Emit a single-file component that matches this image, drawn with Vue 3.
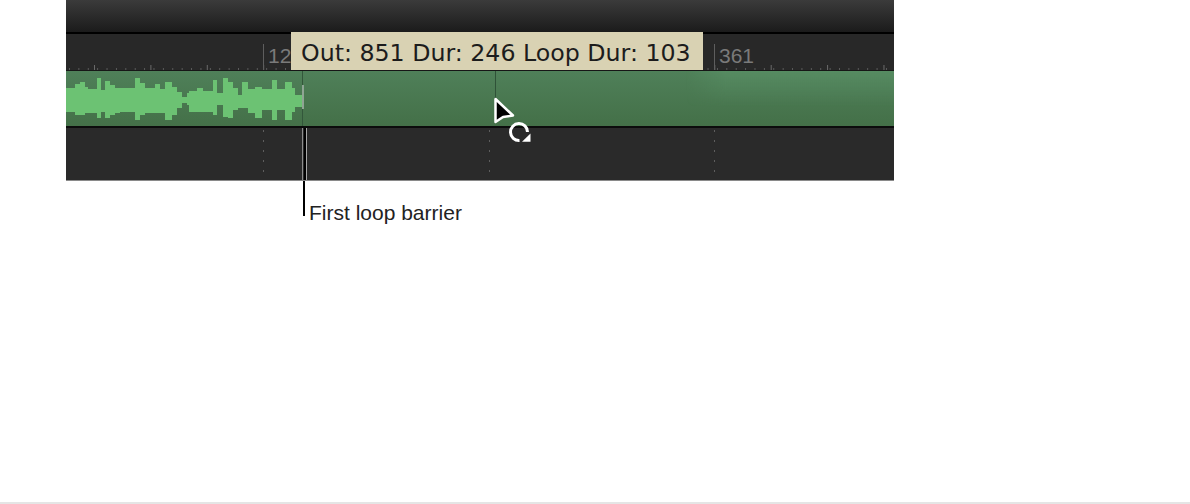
<script setup>
// stepped waveform envelope: [end x, top y, bottom y], x relative to the clip, y relative to the clip top
const steps = [
  [9, 17, 41], [14, 13, 44], [19, 11, 44], [22, 16, 42], [31, 18, 42], [35, 7, 47], [39, 19, 41],
  [44, 10, 47], [49, 14, 44], [54, 17, 42], [69, 17, 41], [74, 7, 49], [79, 12, 44], [89, 17, 42],
  [94, 13, 42], [99, 18, 42], [106, 11, 49], [111, 16, 44], [116, 21, 37], [121, 26, 32],
  [123, 22, 34], [131, 20, 41], [137, 17, 41], [147, 20, 41], [151, 9, 44], [157, 22, 34],
  [162, 7, 46], [167, 11, 47], [172, 17, 39], [176, 24, 37], [182, 11, 37], [189, 18, 42],
  [196, 16, 47], [206, 18, 39], [211, 9, 49], [219, 18, 39], [226, 11, 49], [229, 17, 41], [237, 24, 36]
]

const wavePoints = (() => {
  const top = []
  const bottom = []
  let x = 0
  for (const [end, t, b] of steps) {
    top.push(`${x},${t} ${end},${t}`)
    bottom.unshift(`${end},${b} ${x},${b}`)
    x = end
  }
  return [...top, ...bottom].join(' ')
})()
</script>

<template>
  <div class="page">
    <div class="timeline">
      <div class="top-bar"></div>
      <div class="ruler">
        <span class="mark mark-a">12</span>
        <span class="mark mark-b">361</span>
      </div>
      <div class="clip">
        <svg class="wave" width="237" height="55" viewBox="0 0 237 55">
          <polygon :points="wavePoints" fill="#6cc273" />
        </svg>
        <div class="clip-glow"></div>
        <div class="barrier"></div>
        <div class="barrier-handle"></div>
        <div class="drag-line"></div>
      </div>
      <div class="track">
        <i class="dots dots-a"></i>
        <i class="dots dots-b"></i>
        <i class="dots dots-c"></i>
        <i class="barrier-low"></i>
      </div>

      <div class="tooltip">Out: 851 Dur: 246 Loop Dur: 103</div>

      <svg class="cursor" width="44" height="52" viewBox="0 0 44 52">
        <path d="M2.500 4 L2.500 27 L10 22 L20 20.500 Z" fill="#000" stroke="#fff" stroke-width="2.500" stroke-linejoin="round" />
        <path d="M34.500 37 A8.500 8.500 0 1 0 26.500 45.500" fill="none" stroke="#fff" stroke-width="3" />
        <path d="M29 46.800 L37.500 46.800 L37.500 38.500 Z" fill="#fff" />
      </svg>
    </div>
    <div class="note">First loop barrier</div>
    <div class="page-edge"></div>
  </div>
</template>

<style>
html, body {
  background: #fff;
}
</style>

<style scoped>
.page {
  height: 504px;
  display: flex;
  flex-direction: column;
}

.timeline {
  position: relative;
  flex: none;
  width: 828px;
  margin-left: 66px;
  display: flex;
  flex-direction: column;
}

.top-bar {
  height: 32px;
  background: linear-gradient(#3b3b3b, #1b1b1b);
  border-bottom: 2px solid #000;
}

.ruler {
  position: relative;
  height: 36px;
  background-color: #282828;
  background-image:
    linear-gradient(90deg, #6a6a6a 1px, transparent 1px),
    linear-gradient(90deg, #5c5c5c 1px, transparent 1px);
  background-size: 56.4px 5px, 9.4px 2px;
  background-position: 28px 100%, 3px 100%;
  background-repeat: repeat-x;
  border-bottom: 1px solid #161616;
}

.mark {
  position: absolute;
  top: 10px;
  padding-left: 4px;
  border-left: 1px solid #5e5e5e;
  height: 26px;
  font: 21px/24px "Liberation Sans", Arial, sans-serif;
  color: #7a7a7a;
}

.mark-a {
  left: 197px;
}

.mark-b {
  left: 648px;
}

.clip {
  position: relative;
  height: 55px;
  background: linear-gradient(#4f8059, #447048);
  overflow: hidden;
}

.wave {
  display: block;
  filter: blur(0.6px);
}

.clip-glow {
  position: absolute;
  left: 620px;
  right: 0;
  top: 0;
  height: 36px;
  background: linear-gradient(rgba(100, 160, 115, 0.35), rgba(100, 160, 115, 0));
  -webkit-mask-image: linear-gradient(90deg, transparent, #000 40px);
  mask-image: linear-gradient(90deg, transparent, #000 40px);
}

.barrier {
  position: absolute;
  left: 236px;
  top: 0;
  bottom: 0;
  width: 1px;
  background: #33573b;
}

.barrier-handle {
  position: absolute;
  left: 236px;
  top: 14px;
  width: 2px;
  height: 24px;
  background: #8fa594;
}

.drag-line {
  position: absolute;
  left: 429px;
  top: 0;
  height: 27px;
  width: 1px;
  background: #2f5238;
}

.track {
  position: relative;
  height: 52px;
  background: #2a2a2a;
  border-top: 2px solid #0c0c0c;
  border-bottom: 1px solid #8a8a8a;
}

.dots {
  position: absolute;
  top: 2px;
  bottom: 0;
  width: 1px;
  background: repeating-linear-gradient(#5e5e5e 0 2px, transparent 2px 10px);
}

.dots-a {
  left: 197px;
}

.dots-b {
  left: 423px;
}

.dots-c {
  left: 648px;
}

.barrier-low {
  position: absolute;
  left: 236px;
  top: 0;
  bottom: 0;
  width: 5px;
  box-sizing: border-box;
  border-left: 1px solid #8c8c8c;
  border-right: 1px solid #a8a8a8;
  background: linear-gradient(90deg, transparent 1px, #000 1px, #000 3px, transparent 3px);
}

.tooltip {
  position: absolute;
  left: 225px;
  top: 32px;
  width: 412px;
  height: 38px;
  box-sizing: border-box;
  padding-left: 10px;
  background: #d9d2b3;
  color: #1c1c1c;
  font: 23.7px/42px "DejaVu Sans", sans-serif;
  white-space: nowrap;
  overflow: hidden;
}

.cursor {
  position: absolute;
  left: 427px;
  top: 95px;
}

.note {
  flex: none;
  align-self: flex-start;
  margin-left: 303px;
  height: 35px;
  box-sizing: border-box;
  padding: 20px 0 0 4px;
  border-left: 2px solid #000;
  font: 21px/24px "Liberation Sans", Arial, sans-serif;
  color: #222;
  white-space: nowrap;
}

.page-edge {
  flex: none;
  margin-top: auto;
  height: 2px;
  background: #e5e5e5;
}
</style>
